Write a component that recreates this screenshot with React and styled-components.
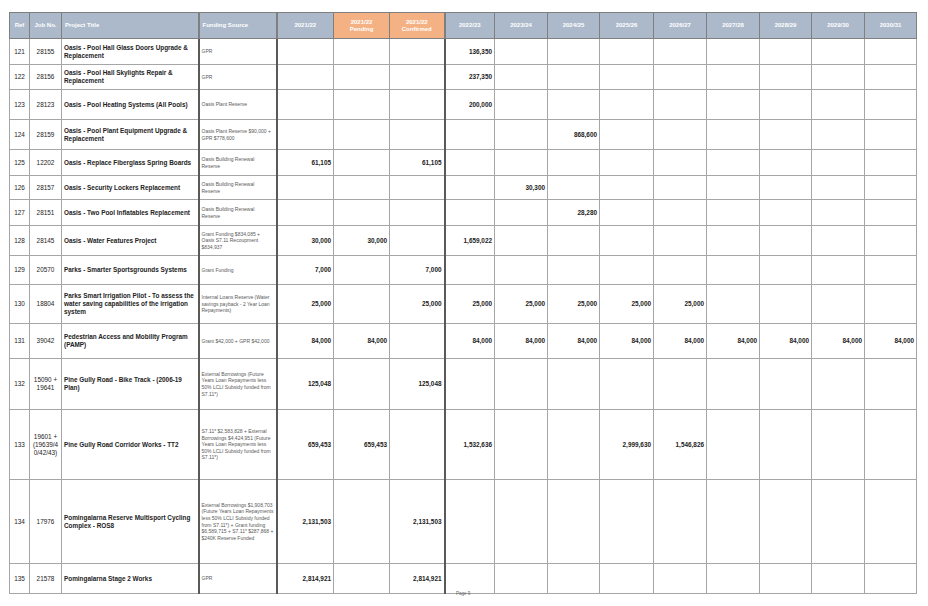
import React from 'react';
import styled, { createGlobalStyle } from 'styled-components';

const Global = createGlobalStyle`
  body { margin: 0; background: #fff; font-family: "Liberation Sans", Arial, sans-serif; }
`;

const Page = styled.div`
  width: 928px;
  height: 606px;
  padding: 12px 0 0 9px;
  box-sizing: border-box;
  position: relative;
`;

const Table = styled.table`
  border-collapse: collapse;
  table-layout: fixed;
  width: 907px;
`;

const Th = styled.th`
  height: 25px;
  padding: 0 3px;
  background: ${p => (p.$orange ? '#f4b183' : '#acb9ca')};
  color: #fff;
  font-size: 6px;
  font-weight: bold;
  text-align: ${p => (p.$left ? 'left' : 'center')};
  border: 1px solid #7f7f7f;
  border-right-width: ${p => (p.$thick ? '2px' : '1px')};
  line-height: 7px;
`;

const Td = styled.td`
  border: 1px solid #a6a6a6;
  border-right: ${p => (p.$thick ? '2px solid #595959' : '1px solid #a6a6a6')};
  padding: 0 2px;
  font-size: ${p => (p.$small ? '5px' : '6.4px')};
  line-height: ${p => (p.$small ? '6.6px' : '8px')};
  color: ${p => (p.$small ? '#595959' : '#222')};
  font-weight: ${p => (p.$bold ? 'bold' : 'normal')};
  text-align: ${p => p.$align || 'left'};
  vertical-align: middle;
  overflow: hidden;
  word-break: ${p => (p.$breakAll ? 'break-all' : 'normal')};
`;

const Footer = styled.div`
  position: absolute;
  left: 456px;
  top: 591px;
  font-size: 4.5px;
  color: #666;
`;

const widths = [20, 32, 137, 78, 57, 56, 55, 50, 53, 52, 54, 53, 53, 52, 53, 52];
const years = ['2022/23', '2023/24', '2024/25', '2025/26', '2026/27', '2027/28', '2028/29', '2029/30', '2030/31'];

const rows = [
  [121, '28155', 'Oasis - Pool Hall Glass Doors Upgrade & Replacement', 'GPR', 26, { 7: '136,350' }],
  [122, '28156', 'Oasis - Pool Hall Skylights Repair & Replacement', 'GPR', 25, { 7: '237,350' }],
  [123, '28123', 'Oasis - Pool Heating Systems (All Pools)', 'Oasis Plant Reserve', 30, { 7: '200,000' }],
  [124, '28159', 'Oasis - Pool Plant Equipment Upgrade & Replacement', 'Oasis Plant Reserve $90,000 + GPR $778,600', 30, { 9: '868,600' }],
  [125, '12202', 'Oasis - Replace Fiberglass Spring Boards', 'Oasis Building Renewal Reserve', 26, { 4: '61,105', 6: '61,105' }],
  [126, '28157', 'Oasis - Security Lockers Replacement', 'Oasis Building Renewal Reserve', 24, { 8: '30,300' }],
  [127, '28151', 'Oasis - Two Pool Inflatables Replacement', 'Oasis Building Renewal Reserve', 26, { 9: '28,280' }],
  [128, '28145', 'Oasis - Water Features Project', 'Grant Funding $834,085 + Oasis S7.11 Recoupment $834,937', 30, { 4: '30,000', 5: '30,000', 7: '1,659,022' }],
  [129, '20570', 'Parks - Smarter Sportsgrounds Systems', 'Grant Funding', 29, { 4: '7,000', 6: '7,000' }],
  [130, '18804', 'Parks Smart Irrigation Pilot - To assess the water saving capabilities of the irrigation system', 'Internal Loans Reserve (Water savings payback - 2 Year Loan Repayments)', 39, { 4: '25,000', 6: '25,000', 7: '25,000', 8: '25,000', 9: '25,000', 10: '25,000', 11: '25,000' }],
  [131, '39042', 'Pedestrian Access and Mobility Program (PAMP)', 'Grant $42,000 + GPR $42,000', 35, { 4: '84,000', 5: '84,000', 7: '84,000', 8: '84,000', 9: '84,000', 10: '84,000', 11: '84,000', 12: '84,000', 13: '84,000', 14: '84,000', 15: '84,000' }],
  [132, '15090 + 19641', 'Pine Gully Road - Bike Track - (2006-19 Plan)', 'External Borrowings (Future Years Loan Repayments less 50% LCLI Subsidy funded from S7.11*)', 51, { 4: '125,048', 6: '125,048' }],
  [133, '19601 + (19639/40/42/43)', 'Pine Gully Road Corridor Works - TT2', 'S7.11* $2,583,828 + External Borrowings $4,424,951 (Future Years Loan Repayments less 50% LCLI Subsidy funded from S7.11*)', 70, { 4: '659,453', 5: '659,453', 7: '1,532,636', 10: '2,999,630', 11: '1,546,826' }],
  [134, '17976', 'Pomingalarna Reserve Multisport Cycling Complex - ROS8', 'External Borrowings $1,908,703 (Future Years Loan Repayments less 50% LCLI Subsidy funded from S7.11*) + Grant funding $6,589,715 + S7.11* $287,868 + $240K Reserve Funded', 84, { 4: '2,131,503', 6: '2,131,503' }],
  [135, '21578', 'Pomingalarna Stage 2 Works', 'GPR', 30, { 4: '2,814,921', 6: '2,814,921' }],
];

const thickCols = [2, 3, 6];

export default function App() {
  return (
    <Page>
      <Global />
      <Table>
        <colgroup>
          {widths.map((w, i) => <col key={i} style={{ width: w }} />)}
        </colgroup>
        <thead>
          <tr>
            <Th>Ref</Th>
            <Th>Job No.</Th>
            <Th $left $thick>Project Title</Th>
            <Th $left $thick>Funding Source</Th>
            <Th>2021/22</Th>
            <Th $orange>2021/22<br />Pending</Th>
            <Th $orange $thick>2021/22<br />Confirmed</Th>
            {years.map(y => <Th key={y}>{y}</Th>)}
          </tr>
        </thead>
        <tbody>
          {rows.map(([ref, job, title, fund, h, vals]) => (
            <tr key={ref} style={{ height: h }}>
              <Td $align="center">{ref}</Td>
              <Td $align="center" $breakAll={job.length > 14}>{job}</Td>
              <Td $bold $thick>{title}</Td>
              <Td $small $thick>{fund}</Td>
              {Array.from({ length: 12 }, (_, k) => {
                const c = k + 4;
                return (
                  <Td key={c} $align="right" $bold $thick={thickCols.includes(c)}>
                    {vals[c] || ''}
                  </Td>
                );
              })}
            </tr>
          ))}
        </tbody>
      </Table>
      <Footer>Page 9</Footer>
    </Page>
  );
}
